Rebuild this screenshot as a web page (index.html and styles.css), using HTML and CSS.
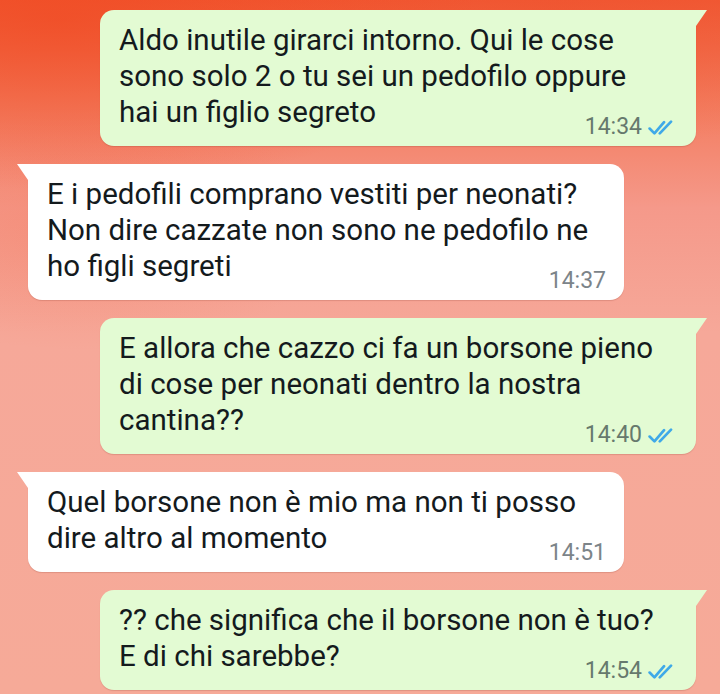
FILE: index.html
```html
<!DOCTYPE html>
<html lang="it">
<head>
    <meta charset="UTF-8">
    <meta name="viewport" content="width=device-width, initial-scale=1.0">
    <title>Chat</title>
    <link rel="stylesheet" href="styles.css">
</head>
<body>

<!-- Chat conversation -->
<div class="chat">

    <div class="msg out">
        <div class="text">Aldo inutile girarci intorno. Qui le cose<br>sono solo 2 o tu sei un pedofilo oppure<br>hai un figlio segreto</div>
        <div class="meta">
            <span class="time">14:34</span>
            <svg class="ticks" viewBox="0 0 28 14" width="30" height="15"><path d="M1.5 8 L6 12.5 L15 2 M11 12.5 L21.5 1.5"/></svg>
        </div>
    </div>

    <div class="msg in">
        <div class="text">E i pedofili comprano vestiti per neonati?<br>Non dire cazzate non sono ne pedofilo ne<br>ho figli segreti</div>
        <div class="meta">
            <span class="time">14:37</span>
        </div>
    </div>

    <div class="msg out">
        <div class="text">E allora che cazzo ci fa un borsone pieno<br>di cose per neonati dentro la nostra<br>cantina??</div>
        <div class="meta">
            <span class="time">14:40</span>
            <svg class="ticks" viewBox="0 0 28 14" width="30" height="15"><path d="M1.5 8 L6 12.5 L15 2 M11 12.5 L21.5 1.5"/></svg>
        </div>
    </div>

    <div class="msg in">
        <div class="text">Quel borsone non è mio ma non ti posso<br>dire altro al momento</div>
        <div class="meta">
            <span class="time">14:51</span>
        </div>
    </div>

    <div class="msg out">
        <div class="text">?? che significa che il borsone non è tuo?<br>E di chi sarebbe?</div>
        <div class="meta">
            <span class="time">14:54</span>
            <svg class="ticks" viewBox="0 0 28 14" width="30" height="15"><path d="M1.5 8 L6 12.5 L15 2 M11 12.5 L21.5 1.5"/></svg>
        </div>
    </div>

</div>

</body>
</html>
```

FILE: styles.css
```css
/* Page and wallpaper */
body {
    margin: 0;
    font-family: Roboto, 'Noto Sans', sans-serif;
    color: #141a1d;
    height: 694px;
    overflow: hidden;
    background:
        radial-gradient(ellipse 420px 170px at 60px 20px, rgba(240, 70, 30, 0.6), rgba(240, 70, 30, 0) 100%),
        radial-gradient(ellipse 380px 140px at 560px 10px, rgba(238, 80, 45, 0.45), rgba(238, 80, 45, 0) 100%),
        radial-gradient(ellipse 260px 120px at 80px 230px, rgba(243, 120, 90, 0.35), rgba(243, 120, 90, 0) 100%),
        linear-gradient(180deg, #f15a34 0%, #f37a5c 14%, #f5998a 30%, #f6a899 48%, #f6aa98 100%);
}

/* Message column */
.chat {
    display: flex;
    flex-direction: column;
    gap: 18px;
    padding-top: 10px;
}

/* Bubble */
.msg {
    position: relative;
    width: 596px;
    box-sizing: border-box;
    padding: 12px 18px 8px 19px;
    border-radius: 14px;
    box-shadow: 0 1px 1px rgba(120, 40, 30, 0.18);
}

.msg::before {
    content: "";
    position: absolute;
    top: 0;
    width: 0;
    height: 0;
    border-top: 16px solid;
}

.out {
    align-self: flex-end;
    margin-right: 24px;
    background-color: #e3fbd3;
    border-top-right-radius: 0;
}

.out::before {
    right: -11px;
    border-top-color: #e3fbd3;
    border-right: 11px solid transparent;
}

.in {
    align-self: flex-start;
    margin-left: 28px;
    background-color: #fff;
    border-top-left-radius: 0;
}

.in::before {
    left: -11px;
    border-top-color: #fff;
    border-left: 11px solid transparent;
}

/* Message text */
.text {
    font-size: 29.5px;
    line-height: 36px;
    white-space: nowrap;
}

/* Time and read ticks */
.meta {
    display: flex;
    justify-content: flex-end;
    align-items: center;
    gap: 6px;
    margin-top: -14px;
    height: 22px;
}

.time {
    font-size: 23px;
    line-height: 22px;
    color: #66796d;
}

.in .time {
    color: #7c8489;
}

.ticks {
    fill: none;
    stroke: #3fa9e8;
    stroke-width: 2.5;
    stroke-linecap: round;
    stroke-linejoin: round;
    margin-top: 1px;
}
```
